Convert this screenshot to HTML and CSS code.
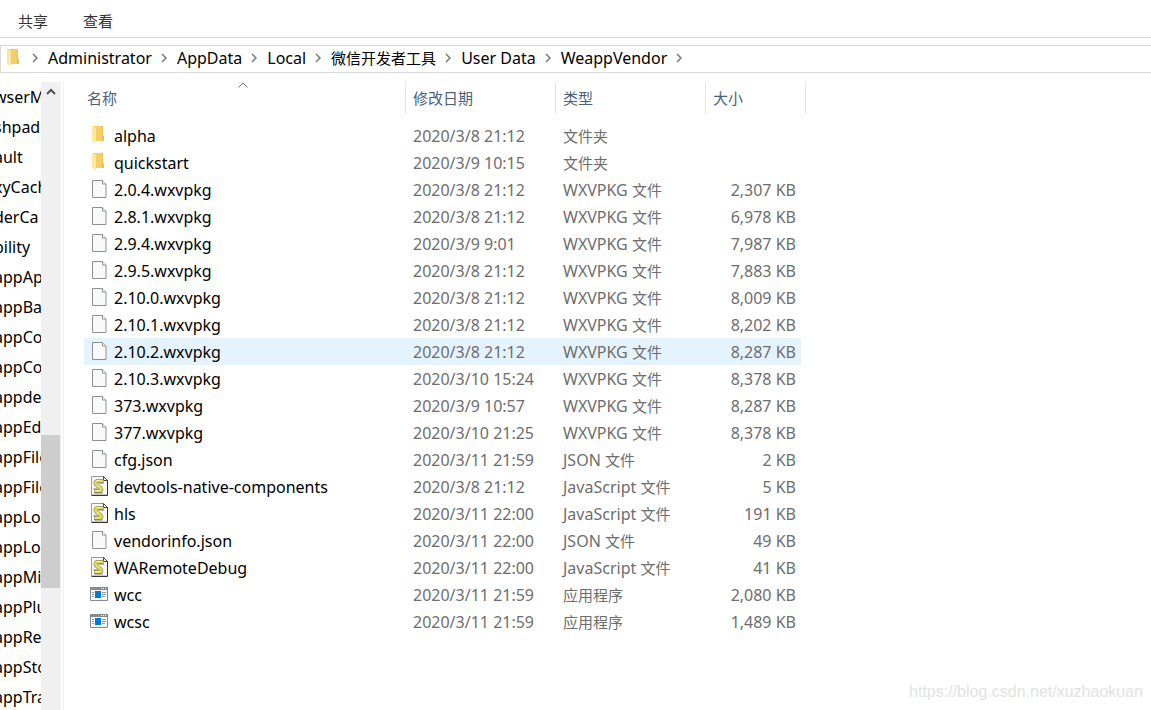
FILE: index.html
```html
<!DOCTYPE html>
<html lang="zh-CN">
<head>
<meta charset="utf-8">
<title>WeappVendor</title>
<link rel="stylesheet" href="styles.css">
</head>
<body>
<svg class="defs" aria-hidden="true">
  <symbol id="folder" viewBox="1 1 18 18">
    <path d="M3 1h11v10h1v5H5z" fill="#f3ce6a"/>
    <path d="M13 1h1v10h1v5h-2z" fill="#e9c05a"/>
    <path d="M3 1l4 2v15l-4-2z" fill="#ffe79c"/>
  </symbol>
  <symbol id="file" viewBox="1 0 18 18">
    <path d="M3.500 .5h10l3.500 3.500v13.500h-13.500z" fill="#f8f9f9" stroke="#8f8f8f"/>
    <path d="M13.500 .5v3.500h3.500" fill="#fff" stroke="#8f8f8f"/>
  </symbol>
  <symbol id="script" viewBox="0 0 18 20">
    <path d="M1.500 .5h12l4 4v14.500h-16z" fill="#fafafa" stroke="#999"/>
    <path d="M17.500 4v15.500h-16" fill="none" stroke="#333"/>
    <path d="M13.500 .5v4h4z" fill="#fff" stroke="#444"/>
    <path d="M13.500 5H7c-2 .5-2 2.500-.5 4l4 3c1.500 1.500 1 3-.5 3H4" fill="none" stroke="#8f8f76" stroke-width="4"/>
    <path d="M13 5H7c-2 .5-2 2.500-.5 4l4 3c1.500 1.500 1 3-.5 3H4.500" fill="none" stroke="#e3da4f" stroke-width="2.600"/>
    <path d="M6.500 4.500h4M5 14.500h5M6.500 8.500l3 2.500" fill="none" stroke="#fbf58d"/>
    <path d="M9 7h5M3.500 13h4M4.500 17h8" fill="none" stroke="#77776c"/>
  </symbol>
  <symbol id="app" viewBox="0 0 18 14">
    <path d="M.5 .5h17v13H.5z" fill="#f7f7f7" stroke="#848b91"/>
    <path d="M0 0h18v3H0z" fill="#848b91"/>
    <path d="M11 1h1v1h-1zM13 1h1v1h-1zM15 1h1v1h-1z" fill="#fff"/>
    <path d="M5 4h6v7H5z" fill="#0078d7"/>
    <path d="M2 5.500h2M2 7.500h2M2 9.500h2M12 5.500h4M12 7.500h4M12 9.500h3" stroke="#92989d"/>
  </symbol>
  <symbol id="chevron" viewBox="0 0 6 10">
    <path d="M1 1l4 4-4 4" fill="none" stroke="#777" stroke-width="1.500"/>
  </symbol>
</svg>

<nav class="tabs" aria-label="功能区">
  <button type="button">共享</button>
  <button type="button">查看</button>
</nav>

<nav class="address" aria-label="地址">
  <svg class="icon"><use href="#folder"/></svg>
  <svg class="chevron"><use href="#chevron"/></svg>
  <button type="button">Administrator</button>
  <svg class="chevron"><use href="#chevron"/></svg>
  <button type="button">AppData</button>
  <svg class="chevron"><use href="#chevron"/></svg>
  <button type="button">Local</button>
  <svg class="chevron"><use href="#chevron"/></svg>
  <button type="button" class="cjk">微信开发者工具</button>
  <svg class="chevron"><use href="#chevron"/></svg>
  <button type="button">User Data</button>
  <svg class="chevron"><use href="#chevron"/></svg>
  <button type="button">WeappVendor</button>
  <svg class="chevron"><use href="#chevron"/></svg>
</nav>

<div class="explorer">
  <ul class="tree">
    <li>wserM</li><li>shpad</li><li>ault</li><li>xyCach</li><li>derCa</li><li>bility</li>
    <li>appAp</li><li>appBa</li><li>appCo</li><li>appCo</li><li>appde</li><li>appEd</li>
    <li>appFile</li><li>appFile</li><li>appLo</li><li>appLo</li><li>appMi</li><li>appPlu</li>
    <li>appRe</li><li>appSto</li><li>appTra</li>
  </ul>
  <div class="scrollbar">
    <button type="button" aria-label="向上滚动"><svg viewBox="0 0 10 8"><path d="M1 6l4-4 4 4" fill="none" stroke="#505050" stroke-width="2"/></svg></button>
    <div class="thumb"></div>
  </div>
  <main class="files">
    <table>
      <colgroup><col class="c-name"><col class="c-date"><col class="c-type"><col class="c-size"></colgroup>
      <thead>
        <tr>
          <th><button type="button">名称</button><svg class="sort" viewBox="0 0 10 6"><path d="M.5 5.500l4.500-4.500 4.500 4.500" fill="none" stroke="#777"/></svg></th>
          <th><button type="button">修改日期</button></th>
          <th><button type="button">类型</button></th>
          <th><button type="button">大小</button></th>
        </tr>
      </thead>
      <tbody>
        <tr><td><svg class="icon"><use href="#folder"/></svg>alpha</td><td>2020/3/8 21:12</td><td><span class="cjk">文件夹</span></td><td></td></tr>
        <tr><td><svg class="icon"><use href="#folder"/></svg>quickstart</td><td>2020/3/9 10:15</td><td><span class="cjk">文件夹</span></td><td></td></tr>
        <tr><td><svg class="icon"><use href="#file"/></svg>2.0.4.wxvpkg</td><td>2020/3/8 21:12</td><td>WXVPKG <span class="cjk">文件</span></td><td>2,307 KB</td></tr>
        <tr><td><svg class="icon"><use href="#file"/></svg>2.8.1.wxvpkg</td><td>2020/3/8 21:12</td><td>WXVPKG <span class="cjk">文件</span></td><td>6,978 KB</td></tr>
        <tr><td><svg class="icon"><use href="#file"/></svg>2.9.4.wxvpkg</td><td>2020/3/9 9:01</td><td>WXVPKG <span class="cjk">文件</span></td><td>7,987 KB</td></tr>
        <tr><td><svg class="icon"><use href="#file"/></svg>2.9.5.wxvpkg</td><td>2020/3/8 21:12</td><td>WXVPKG <span class="cjk">文件</span></td><td>7,883 KB</td></tr>
        <tr><td><svg class="icon"><use href="#file"/></svg>2.10.0.wxvpkg</td><td>2020/3/8 21:12</td><td>WXVPKG <span class="cjk">文件</span></td><td>8,009 KB</td></tr>
        <tr><td><svg class="icon"><use href="#file"/></svg>2.10.1.wxvpkg</td><td>2020/3/8 21:12</td><td>WXVPKG <span class="cjk">文件</span></td><td>8,202 KB</td></tr>
        <tr class="hover"><td><svg class="icon"><use href="#file"/></svg>2.10.2.wxvpkg</td><td>2020/3/8 21:12</td><td>WXVPKG <span class="cjk">文件</span></td><td>8,287 KB</td></tr>
        <tr><td><svg class="icon"><use href="#file"/></svg>2.10.3.wxvpkg</td><td>2020/3/10 15:24</td><td>WXVPKG <span class="cjk">文件</span></td><td>8,378 KB</td></tr>
        <tr><td><svg class="icon"><use href="#file"/></svg>373.wxvpkg</td><td>2020/3/9 10:57</td><td>WXVPKG <span class="cjk">文件</span></td><td>8,287 KB</td></tr>
        <tr><td><svg class="icon"><use href="#file"/></svg>377.wxvpkg</td><td>2020/3/10 21:25</td><td>WXVPKG <span class="cjk">文件</span></td><td>8,378 KB</td></tr>
        <tr><td><svg class="icon"><use href="#file"/></svg>cfg.json</td><td>2020/3/11 21:59</td><td>JSON <span class="cjk">文件</span></td><td>2 KB</td></tr>
        <tr><td><svg class="icon tall"><use href="#script"/></svg>devtools-native-components</td><td>2020/3/8 21:12</td><td>JavaScript <span class="cjk">文件</span></td><td>5 KB</td></tr>
        <tr><td><svg class="icon tall"><use href="#script"/></svg>hls</td><td>2020/3/11 22:00</td><td>JavaScript <span class="cjk">文件</span></td><td>191 KB</td></tr>
        <tr><td><svg class="icon"><use href="#file"/></svg>vendorinfo.json</td><td>2020/3/11 22:00</td><td>JSON <span class="cjk">文件</span></td><td>49 KB</td></tr>
        <tr><td><svg class="icon tall"><use href="#script"/></svg>WARemoteDebug</td><td>2020/3/11 22:00</td><td>JavaScript <span class="cjk">文件</span></td><td>41 KB</td></tr>
        <tr><td><svg class="icon wide"><use href="#app"/></svg>wcc</td><td>2020/3/11 21:59</td><td><span class="cjk">应用程序</span></td><td>2,080 KB</td></tr>
        <tr><td><svg class="icon wide"><use href="#app"/></svg>wcsc</td><td>2020/3/11 21:59</td><td><span class="cjk">应用程序</span></td><td>1,489 KB</td></tr>
      </tbody>
    </table>
  </main>
</div>
<div class="watermark">https://blog.csdn.net/xuzhaokuan</div>
</body>
</html>
```
FILE: styles.css
```css
* { box-sizing: border-box; }

body {
  margin: 0;
  height: 100vh;
  display: flex;
  flex-direction: column;
  overflow: hidden;
  background: #fff;
  color: #000;
  font: 16px/20px "Noto Sans", "Noto Sans CJK SC", sans-serif;
}

.defs { display: none; }

button {
  padding: 0;
  border: 0;
  background: none;
  color: inherit;
  font: inherit;
  white-space: nowrap;
}

.cjk,
.tabs button,
th button { font-size: 15px; }

.tabs {
  display: flex;
  gap: 35px;
  padding: 11px 18px 6px;
  border-bottom: 1px solid #d9d9d9;
  color: #333;
}

.address {
  display: flex;
  align-items: center;
  height: 28px;
  margin-top: 7px;
  padding: 0 0 2px 4px;
  border: 1px solid #d9d9d9;
  border-right: 0;
}

.icon {
  display: block;
  flex: none;
  width: 18px;
  height: 18px;
}

.icon.tall { height: 20px; }
.icon.wide { height: 14px; }

.chevron {
  flex: none;
  width: 6px;
  height: 10px;
  margin: 0 10px 0 9px;
}

.explorer {
  flex: 1;
  min-height: 0;
  display: flex;
  padding-top: 9px;
}

.tree {
  width: 41px;
  margin: 0;
  padding: 0;
  overflow: hidden;
  list-style: none;
  white-space: nowrap;
  line-height: 30px;
}

.tree li { margin-left: -6px; }

.scrollbar {
  width: 20px;
  display: flex;
  flex-direction: column;
  background: #f0f0f0;
}

.scrollbar button {
  height: 20px;
  display: flex;
  align-items: center;
  justify-content: center;
}

.scrollbar svg { width: 10px; height: 8px; }

.thumb {
  width: 19px;
  height: 153px;
  margin-top: 333px;
  background: #cdcdcd;
}

.files {
  flex: 1;
  margin-left: 2px;
  padding-left: 20px;
  border-left: 1px solid #f0f0f0;
}

table {
  width: 722px;
  table-layout: fixed;
  border-spacing: 0;
}

.c-name { width: 322px; }
.c-date, .c-type { width: 150px; }
.c-size { width: 100px; }

th {
  position: relative;
  height: 32px;
  padding: 0 7px;
  border-right: 1px solid #e5e5e5;
  color: #4c607a;
  font-weight: 400;
  text-align: left;
}

th:first-child { padding-left: 3px; }

.sort {
  position: absolute;
  top: 0;
  left: 50%;
  width: 10px;
  height: 6px;
  margin-left: -7px;
}

tbody::before {
  content: "";
  display: block;
  height: 8px;
}

td {
  height: 27px;
  padding: 0 7px;
  color: #6d6d6d;
  white-space: nowrap;
}

td:first-child {
  display: flex;
  align-items: center;
  gap: 6px;
  padding-left: 6px;
  color: #000;
}

td .icon { margin-bottom: 2px; }

td:last-child {
  padding-right: 5px;
  border-right: 5px solid transparent;
  background-clip: padding-box;
  text-align: right;
}

.hover td { background-color: #e5f3ff; }

.watermark {
  position: absolute;
  right: 8px;
  bottom: 8px;
  color: #e2e2e2;
  font: 16px/20px "Liberation Sans", sans-serif;
}
```
